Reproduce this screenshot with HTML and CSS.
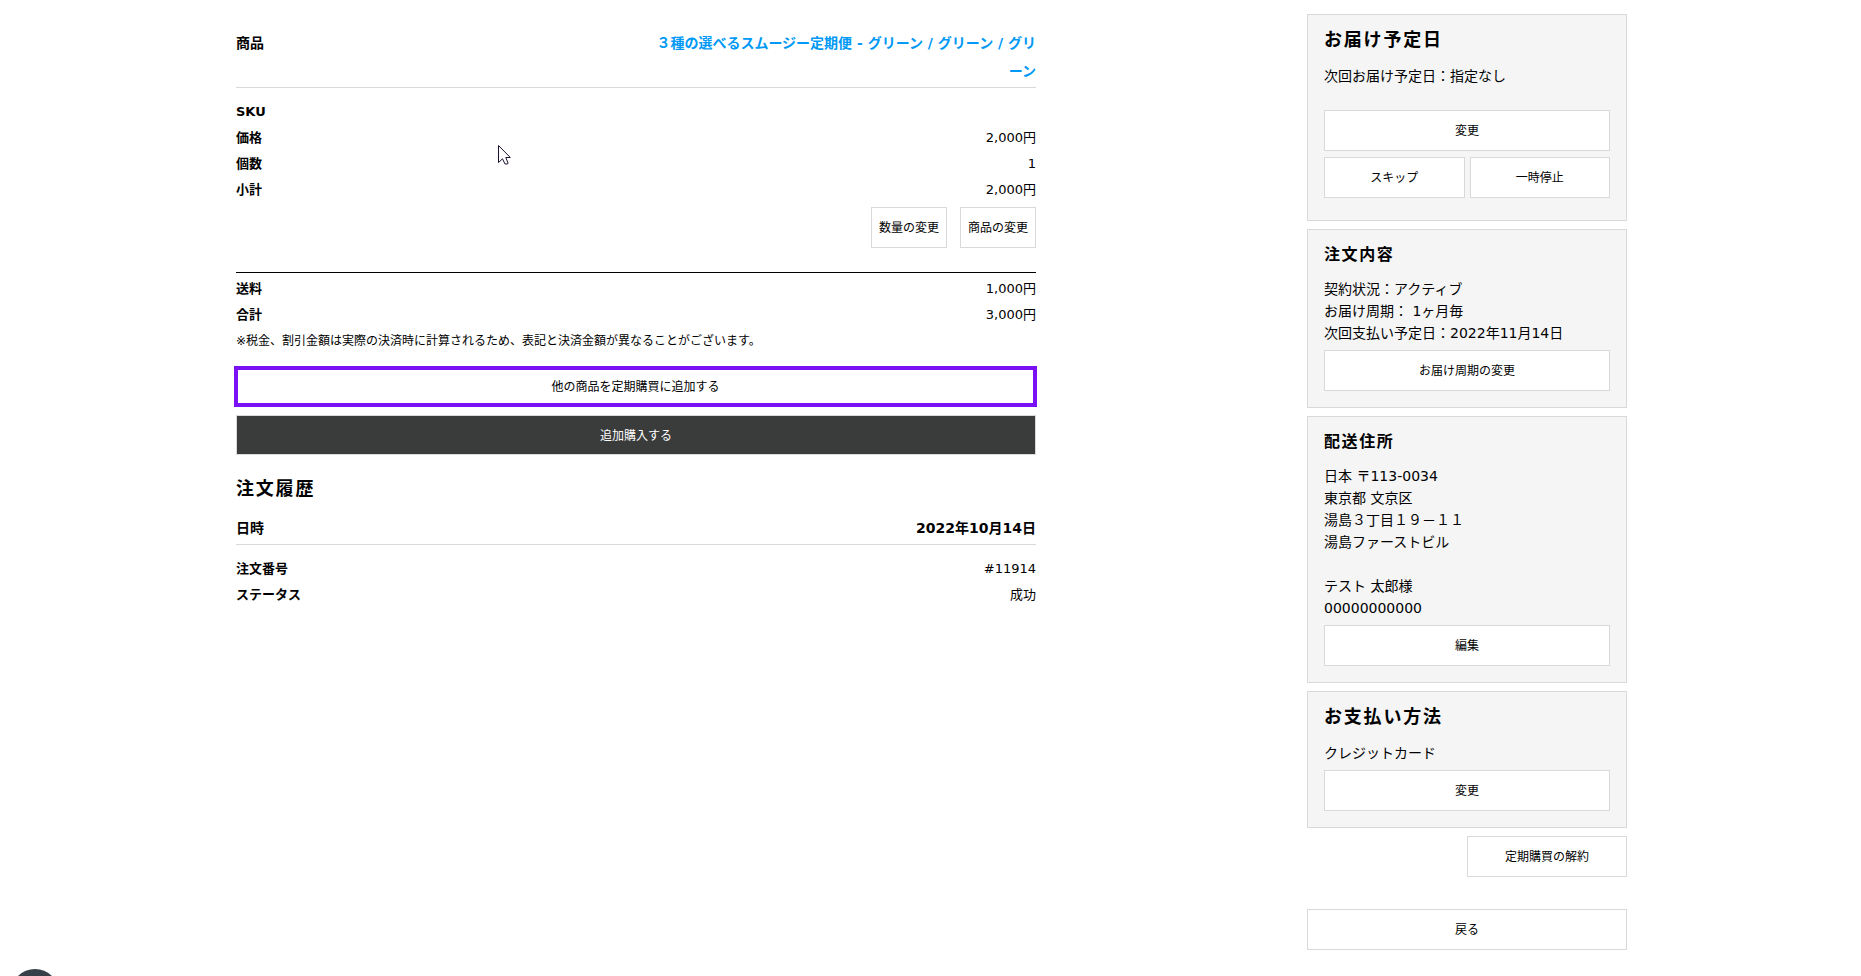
FILE: index.html
```html
<!DOCTYPE html>
<html lang="ja">
<head>
  <meta charset="UTF-8">
  <meta name="viewport" content="width=device-width, initial-scale=1.0">
  <title>定期購買</title>
  <link rel="stylesheet" href="styles.css">
</head>
<body>
  <div class="container">
    <main class="main">
      <!-- 商品 -->
      <div class="head-row">
        <span>商品</span>
        <a class="product-link" href="#">３種の選べるスムージー定期便 - グリーン / グリーン / グリーン</a>
      </div>
      <dl class="list list-item">
        <div class="row"><dt>SKU</dt><dd></dd></div>
        <div class="row"><dt>価格</dt><dd>2,000円</dd></div>
        <div class="row"><dt>個数</dt><dd>1</dd></div>
        <div class="row"><dt>小計</dt><dd>2,000円</dd></div>
      </dl>
      <div class="item-actions">
        <button type="button" class="btn btn-small">数量の変更</button>
        <button type="button" class="btn btn-small">商品の変更</button>
      </div>

      <!-- 合計 -->
      <dl class="list list-total">
        <div class="row"><dt>送料</dt><dd>1,000円</dd></div>
        <div class="row"><dt>合計</dt><dd>3,000円</dd></div>
      </dl>
      <p class="note">※税金、割引金額は実際の決済時に計算されるため、表記と決済金額が異なることがございます。</p>

      <button type="button" class="btn btn-add">他の商品を定期購買に追加する</button>
      <button type="button" class="btn btn-dark">追加購入する</button>

      <!-- 注文履歴 -->
      <h2 class="title-large history-title">注文履歴</h2>
      <div class="head-row">
        <span>日時</span>
        <span>2022年10月14日</span>
      </div>
      <dl class="list list-item">
        <div class="row"><dt>注文番号</dt><dd>#11914</dd></div>
        <div class="row"><dt>ステータス</dt><dd>成功</dd></div>
      </dl>
    </main>

    <aside class="side">
      <section class="card card-delivery">
        <h2 class="title-large">お届け予定日</h2>
        <p>次回お届け予定日：指定なし</p>
        <button type="button" class="btn">変更</button>
        <div class="btn-pair">
          <button type="button" class="btn">スキップ</button>
          <button type="button" class="btn">一時停止</button>
        </div>
      </section>

      <section class="card">
        <h3 class="title-small">注文内容</h3>
        <p>契約状況：アクティブ<br>
          お届け周期： 1ヶ月毎<br>
          次回支払い予定日：2022年11月14日</p>
        <button type="button" class="btn">お届け周期の変更</button>
      </section>

      <section class="card">
        <h3 class="title-small">配送住所</h3>
        <p>日本 〒113-0034<br>
          東京都 文京区<br>
          湯島３丁目１９－１１<br>
          湯島ファーストビル<br>
          <br>
          テスト 太郎様<br>
          00000000000</p>
        <button type="button" class="btn">編集</button>
      </section>

      <section class="card">
        <h2 class="title-large">お支払い方法</h2>
        <p>クレジットカード</p>
        <button type="button" class="btn">変更</button>
      </section>

      <button type="button" class="btn btn-cancel">定期購買の解約</button>
      <button type="button" class="btn btn-back">戻る</button>
    </aside>
  </div>

  <button type="button" class="chat" aria-label="チャット"></button>

  <svg class="pointer" width="13" height="20" viewBox="0 0 13 20" aria-hidden="true">
    <path d="M.5 .5V17.5L4.5 13.8L7 19H9.500L10 18L7.800 12.500H12.300Z" fill="#fff" stroke="#1c1030"/>
  </svg>
</body>
</html>
```

FILE: styles.css
```css
* {
  box-sizing: border-box;
}

body {
  margin: 0;
  background-color: #fff;
  color: #000;
  font-family: "DejaVu Sans", "Noto Sans CJK JP", sans-serif;
  font-size: 14px;
  line-height: 22px;
}

h2,
h3,
p,
dl,
dd {
  margin: 0;
}

/* レイアウト */
.container {
  display: grid;
  grid-template-columns: 800fr 320fr;
  column-gap: 271px;
  align-items: start;
  padding: 14px 234px 24px 236px;
}

.main {
  padding-top: 15px;
}

.side {
  display: flex;
  flex-direction: column;
  gap: 8px;
}

/* 見出し */
.title-large {
  font-size: 18px;
  line-height: 30px;
  letter-spacing: 0.1em;
  margin-bottom: 10px;
}

.title-small {
  font-size: 16px;
  line-height: 30px;
  letter-spacing: 0.1em;
  margin-bottom: 8px;
}

/* 明細 */
.head-row {
  display: flex;
  justify-content: space-between;
  padding-bottom: 2px;
  border-bottom: 1px solid #d9d9d9;
  font-weight: bold;
  line-height: 28px;
}

.product-link {
  width: 49%;
  color: #0099f5;
  text-align: right;
  text-decoration: none;
}

.list {
  font-size: 13px;
  line-height: 26px;
}

.list-item {
  padding-top: 11px;
}

.list-total {
  margin-top: 24px;
  padding-top: 3px;
  border-top: 1px solid #000;
}

.row {
  display: flex;
  justify-content: space-between;
}

.row dt {
  font-weight: bold;
}

.note {
  font-size: 12px;
  line-height: 26px;
}

.item-actions {
  display: flex;
  justify-content: flex-end;
  gap: 13px;
  margin-top: 4px;
}

/* ボタン */
.btn {
  display: block;
  width: 100%;
  height: 41px;
  padding: 0 7px 2px;
  border: 1px solid #d9d9d9;
  border-radius: 0;
  background-color: #fff;
  color: #000;
  font-family: inherit;
  font-size: 12px;
  cursor: pointer;
}

.btn-small {
  width: auto;
}

.btn-add {
  width: calc(100% + 3px);
  margin: 12px -1px 8px -2px;
  border: 4px solid #7a10f5;
}

.btn-dark {
  height: 40px;
  background-color: #3a3c3b;
  color: #fff;
}

.history-title {
  margin-top: 19px;
}

/* カード */
.card {
  padding: 10px 16px 16px;
  border: 1px solid #d9d9d9;
  background-color: #f5f5f5;
}

.card .btn {
  margin-top: 6px;
}

.card-delivery {
  padding-bottom: 22px;
}

.card-delivery p {
  margin-bottom: 23px;
}

.card-delivery p + .btn {
  margin-top: 0;
}

.btn-pair {
  display: flex;
  gap: 5px;
}

.btn-cancel {
  width: 50%;
  align-self: flex-end;
}

.btn-back {
  margin-top: 24px;
}

/* チャット */
.chat {
  position: fixed;
  left: 11px;
  bottom: -41px;
  width: 48px;
  height: 48px;
  padding: 0;
  border: none;
  border-radius: 50%;
  background-color: #364049;
}

.pointer {
  position: absolute;
  top: 145px;
  left: 498px;
  pointer-events: none;
}
```
